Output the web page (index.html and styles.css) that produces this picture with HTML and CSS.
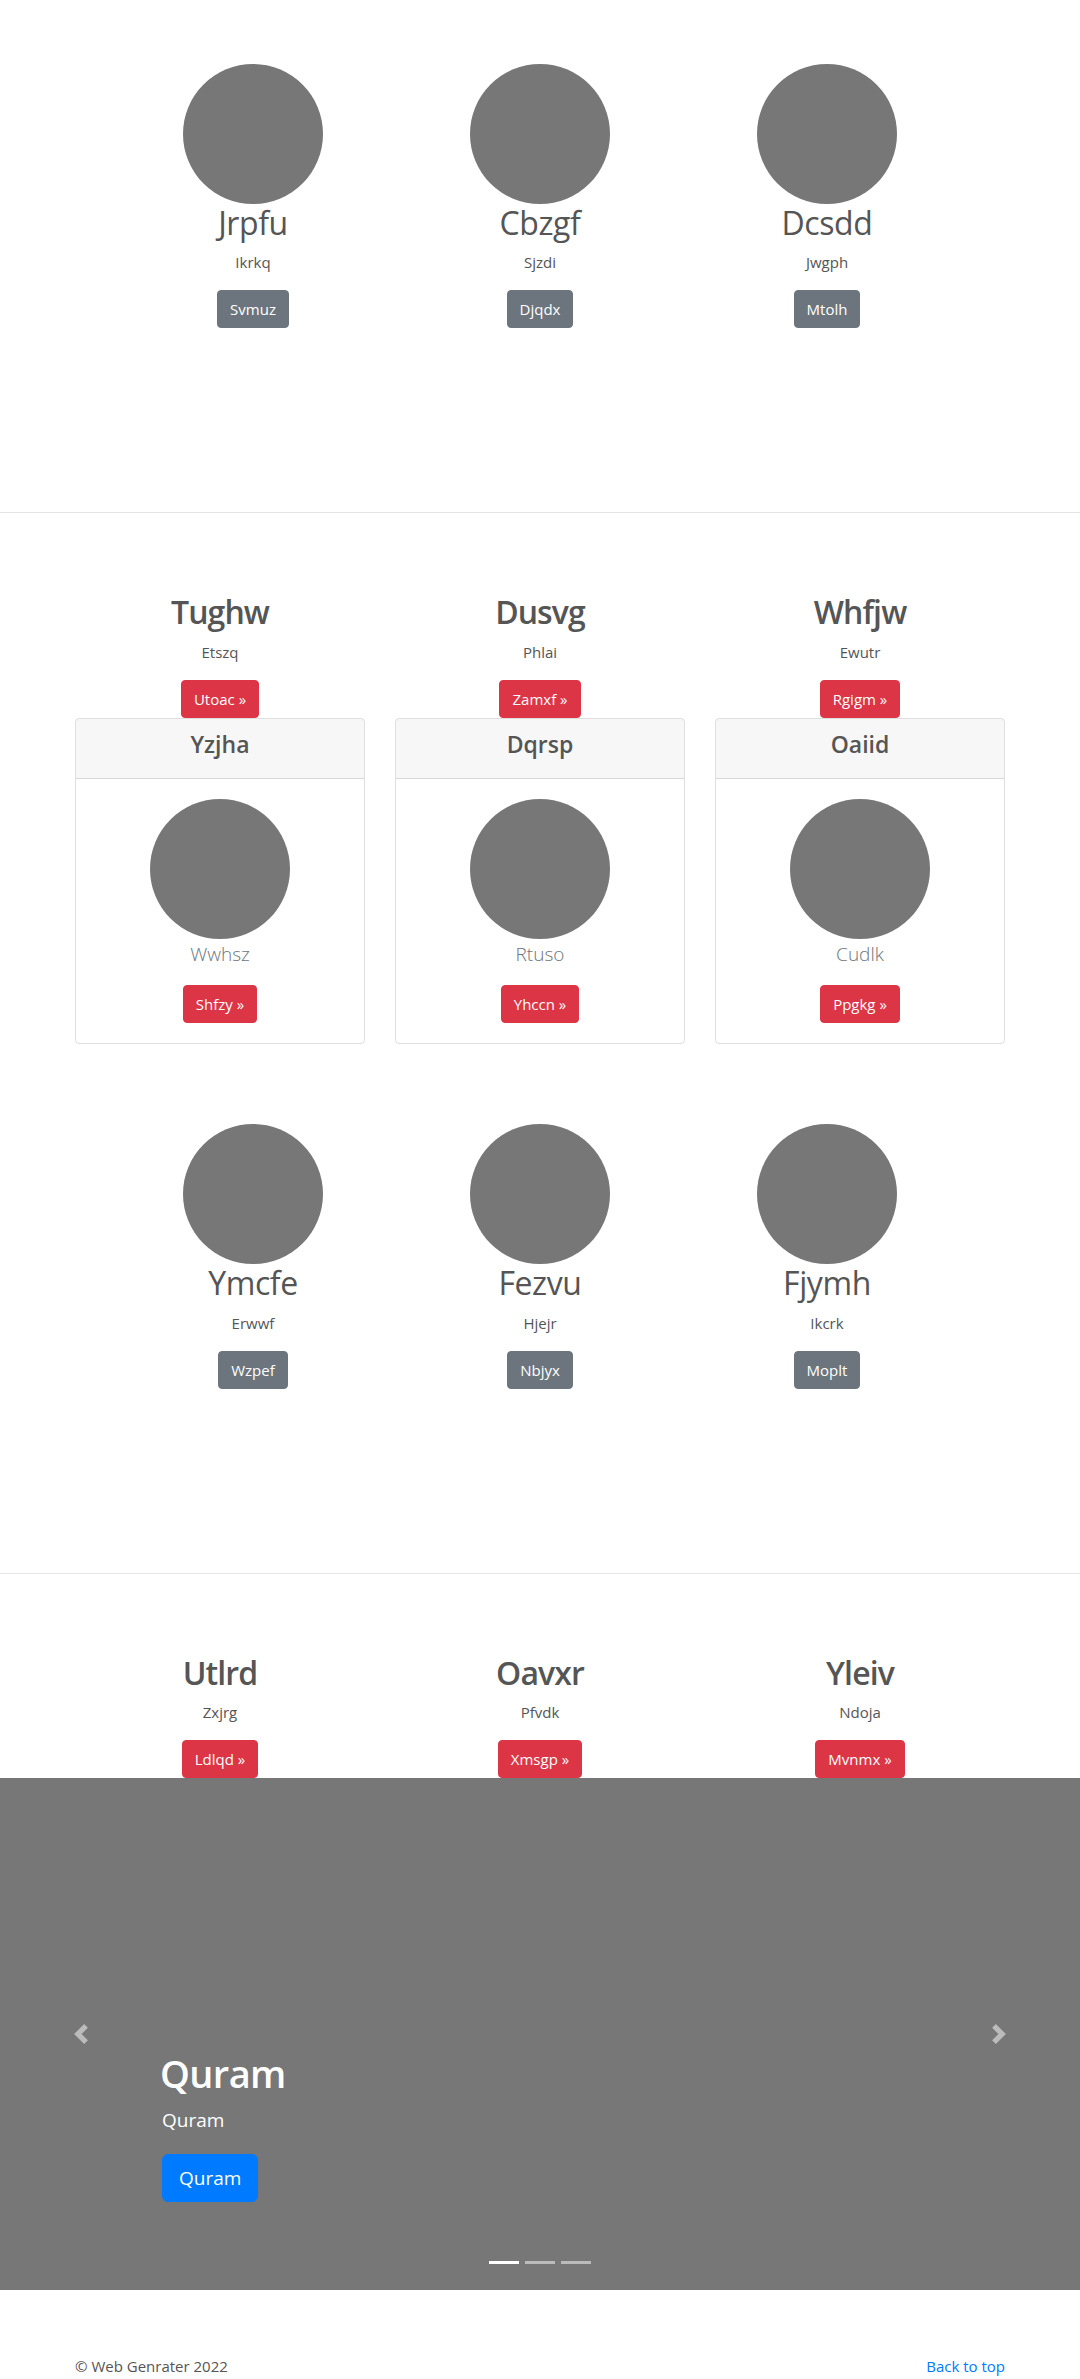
FILE: index.html
```html
<!DOCTYPE html>
<html lang="en">
<head>
<meta charset="utf-8">
<title>Web Genrater</title>
<link rel="stylesheet" href="styles.css">
</head>
<body>
<main>
  <section class="container circle-row first">
    <div class="circle-col">
      <div class="avatar"></div>
      <h2 class="name">Jrpfu</h2>
      <p class="sub">Ikrkq</p>
      <a class="btn btn-secondary" href="#">Svmuz</a>
    </div>
    <div class="circle-col">
      <div class="avatar"></div>
      <h2 class="name">Cbzgf</h2>
      <p class="sub">Sjzdi</p>
      <a class="btn btn-secondary" href="#">Djqdx</a>
    </div>
    <div class="circle-col">
      <div class="avatar"></div>
      <h2 class="name">Dcsdd</h2>
      <p class="sub">Jwgph</p>
      <a class="btn btn-secondary" href="#">Mtolh</a>
    </div>
  </section>

  <hr class="divider">

  <section class="container text-row">
    <div class="text-col">
      <h2 class="title">Tughw</h2>
      <p class="sub">Etszq</p>
      <a class="btn btn-danger" href="#">Utoac &raquo;</a>
    </div>
    <div class="text-col">
      <h2 class="title">Dusvg</h2>
      <p class="sub">Phlai</p>
      <a class="btn btn-danger" href="#">Zamxf &raquo;</a>
    </div>
    <div class="text-col">
      <h2 class="title">Whfjw</h2>
      <p class="sub">Ewutr</p>
      <a class="btn btn-danger" href="#">Rgigm &raquo;</a>
    </div>
  </section>

  <section class="container card-row">
    <div class="card">
      <div class="card-header"><h4>Yzjha</h4></div>
      <div class="card-body">
        <div class="avatar"></div>
        <p class="lead">Wwhsz</p>
        <a class="btn btn-danger" href="#">Shfzy &raquo;</a>
      </div>
    </div>
    <div class="card">
      <div class="card-header"><h4>Dqrsp</h4></div>
      <div class="card-body">
        <div class="avatar"></div>
        <p class="lead">Rtuso</p>
        <a class="btn btn-danger" href="#">Yhccn &raquo;</a>
      </div>
    </div>
    <div class="card">
      <div class="card-header"><h4>Oaiid</h4></div>
      <div class="card-body">
        <div class="avatar"></div>
        <p class="lead">Cudlk</p>
        <a class="btn btn-danger" href="#">Ppgkg &raquo;</a>
      </div>
    </div>
  </section>

  <section class="container circle-row second">
    <div class="circle-col">
      <div class="avatar"></div>
      <h2 class="name">Ymcfe</h2>
      <p class="sub">Erwwf</p>
      <a class="btn btn-secondary" href="#">Wzpef</a>
    </div>
    <div class="circle-col">
      <div class="avatar"></div>
      <h2 class="name">Fezvu</h2>
      <p class="sub">Hjejr</p>
      <a class="btn btn-secondary" href="#">Nbjyx</a>
    </div>
    <div class="circle-col">
      <div class="avatar"></div>
      <h2 class="name">Fjymh</h2>
      <p class="sub">Ikcrk</p>
      <a class="btn btn-secondary" href="#">Moplt</a>
    </div>
  </section>

  <hr class="divider">

  <section class="container text-row">
    <div class="text-col">
      <h2 class="title">Utlrd</h2>
      <p class="sub">Zxjrg</p>
      <a class="btn btn-danger" href="#">Ldlqd &raquo;</a>
    </div>
    <div class="text-col">
      <h2 class="title">Oavxr</h2>
      <p class="sub">Pfvdk</p>
      <a class="btn btn-danger" href="#">Xmsgp &raquo;</a>
    </div>
    <div class="text-col">
      <h2 class="title">Yleiv</h2>
      <p class="sub">Ndoja</p>
      <a class="btn btn-danger" href="#">Mvnmx &raquo;</a>
    </div>
  </section>
</main>

<div class="carousel">
  <a class="carousel-control prev" href="#">
    <svg width="20" height="20" viewBox="0 0 8 8" aria-hidden="true"><path fill="#fff" d="M5.25 0l-4 4 4 4 1.5-1.5-2.5-2.5 2.5-2.5-1.5-1.5z"/></svg>
  </a>
  <div class="carousel-caption">
    <h1>Quram</h1>
    <p>Quram</p>
    <a class="btn btn-lg btn-primary" href="#">Quram</a>
  </div>
  <a class="carousel-control next" href="#">
    <svg width="20" height="20" viewBox="0 0 8 8" aria-hidden="true"><path fill="#fff" d="M2.75 0l-1.5 1.5 2.5 2.5-2.5 2.5 1.5 1.5 4-4-4-4z"/></svg>
  </a>
  <ol class="indicators">
    <li class="active"></li>
    <li></li>
    <li></li>
  </ol>
</div>

<footer class="footer">
  <p>&copy; Web Genrater 2022</p>
  <a class="back" href="#">Back to top</a>
</footer>
</body>
</html>
```
FILE: styles.css
```css
* { box-sizing: border-box; }

html, body {
  margin: 0;
  padding: 0;
}

body {
  font-family: "Open Sans", "Noto Sans", sans-serif;
  font-size: 16px;
  line-height: 1.5;
  color: #555;
  background: #fff;
}

.container {
  width: 960px;
  margin: 0 auto;
}

h1, h2, h4, p { margin: 0; }

.avatar {
  width: 140px;
  height: 140px;
  border-radius: 50%;
  background: #777;
}

.circle-row {
  display: grid;
  grid-template-columns: repeat(3, 287px);
  justify-content: center;
  padding-bottom: 104px;
}
.circle-row.first { padding-top: 64px; }
.circle-row.second { padding-top: 80px; }

.circle-col {
  display: flex;
  flex-direction: column;
  align-items: center;
  text-align: center;
}

.name {
  font-size: 32px;
  font-weight: 400;
  line-height: 1.2;
  margin-bottom: 8px;
  letter-spacing: -0.4px;
}

.sub {
  font-size: 15px;
  line-height: 24px;
  margin-bottom: 16px;
}

.divider {
  margin: 80px 0;
  border: 0;
  border-top: 1px solid rgba(0, 0, 0, .1);
  height: 0;
}

.text-row {
  display: grid;
  grid-template-columns: repeat(3, 320px);
}

.text-col {
  display: flex;
  flex-direction: column;
  align-items: center;
  text-align: center;
}

.title {
  font-size: 32px;
  font-weight: 600;
  line-height: 1.2;
  margin-bottom: 8px;
  letter-spacing: -0.9px;
}

.btn {
  display: inline-block;
  font-size: 15px;
  line-height: 24px;
  padding: 6px 12px;
  border: 1px solid transparent;
  border-radius: 4px;
  color: #fff;
  text-decoration: none;
  text-align: center;
}
.btn-secondary { background: #6c757d; border-color: #6c757d; }
.btn-danger { background: #dc3545; border-color: #dc3545; }
.btn-primary { background: #007bff; border-color: #007bff; }
.btn-lg {
  font-size: 19px;
  line-height: 30px;
  padding: 8px 16px;
  border-radius: 6px;
}

.card-row {
  display: grid;
  grid-template-columns: repeat(3, 320px);
}

.card {
  margin: 0 15px;
  border: 1px solid rgba(0, 0, 0, .125);
  border-radius: 4px;
  text-align: center;
  overflow: hidden;
}

.card-header {
  padding: 12px 20px;
  background: rgba(0, 0, 0, .03);
  border-bottom: 1px solid rgba(0, 0, 0, .125);
}
.card-header h4 {
  font-size: 23px;
  font-weight: 600;
  line-height: 1.2;
  margin-bottom: 8px;
  color: #555;
}

.card-body {
  padding: 20px;
  display: flex;
  flex-direction: column;
  align-items: center;
}

.lead {
  font-size: 19px;
  font-weight: 300;
  line-height: 30px;
  margin-bottom: 16px;
  color: #6c757d;
}

.carousel {
  position: relative;
  height: 512px;
  background: #777;
  margin-bottom: 64px;
}

.carousel-control {
  position: absolute;
  top: 0;
  bottom: 0;
  width: 15%;
  display: flex;
  align-items: center;
  justify-content: center;
  opacity: .5;
}
.carousel-control.prev { left: 0; }
.carousel-control.next { right: 0; }
.carousel-control svg { display: block; }

.carousel-caption {
  position: absolute;
  left: 15%;
  bottom: 88px;
  display: flex;
  flex-direction: column;
  align-items: flex-start;
  color: #fff;
}
.carousel-caption h1 {
  font-size: 38px;
  font-weight: 600;
  line-height: 48px;
  margin-bottom: 8px;
  letter-spacing: -0.6px;
  margin-left: -2px;
}
.carousel-caption p {
  font-size: 19px;
  line-height: 30px;
  margin-bottom: 19px;
}

.indicators {
  position: absolute;
  left: 0;
  right: 0;
  bottom: 16px;
  margin: 0;
  padding: 0;
  list-style: none;
  display: flex;
  justify-content: center;
  gap: 6px;
}
.indicators li {
  width: 30px;
  height: 3px;
  margin: 10px 0;
  background: #fff;
  opacity: .5;
}
.indicators li.active { opacity: 1; }

.footer {
  width: 930px;
  margin: 0 auto;
  display: flex;
  justify-content: space-between;
  font-size: 15px;
  line-height: 24px;
}
.footer p { margin-bottom: 16px; }
.back {
  color: #007bff;
  text-decoration: none;
}
```
